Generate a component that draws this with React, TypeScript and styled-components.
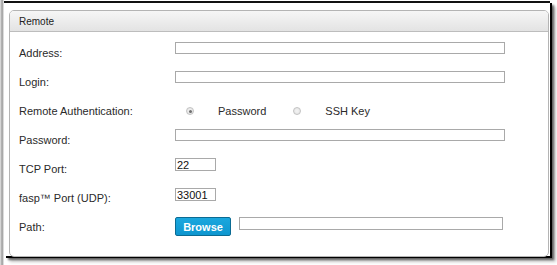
import React from "react";
import styled, { createGlobalStyle } from "styled-components";

const GlobalStyle = createGlobalStyle`
  html, body {
    margin: 0;
    padding: 0;
    background: #fff;
  }
  body {
    font-family: "Liberation Sans", Arial, sans-serif;
    color: #222;
  }
`;

const Frame = styled.div`
  width: 557px;
  height: 265px;
  box-sizing: border-box;
  padding: 1px 0 0 4px;
  background: linear-gradient(
    to right,
    #e4e4e4 0,
    #c8c8c8 1px,
    #9a9a9a 2px,
    #b8b8b8 3px,
    #fff 4px
  );
`;

const Window = styled.div`
  width: 546px;
  height: 255px;
  box-sizing: border-box;
  border-top: 2px solid #111;
  background: #fff;
  padding: 7px 0 0 5px;
  box-shadow: 2px 2px 0 #000, 4px 4px 2px rgba(0, 0, 0, 0.55),
    6px 6px 3px rgba(0, 0, 0, 0.2);
`;

const Panel = styled.section`
  width: 540px;
  height: 247px;
  box-sizing: border-box;
  border: 1px solid #b4b4b4;
  border-radius: 5px;
  overflow: hidden;
`;

const PanelHeader = styled.header`
  height: 21px;
  box-sizing: border-box;
  padding-left: 9px;
  display: flex;
  align-items: center;
  font-size: 10px;
  color: #222;
  background: linear-gradient(to bottom, #f6f6f6, #e3e3e3);
  border-bottom: 1px solid #bdbdbd;
`;

const Form = styled.div`
  display: grid;
  grid-template-columns: 156px 1fr;
  grid-auto-rows: 29px;
  padding: 6px 0 0 9px;
`;

const Label = styled.div`
  font-size: 11px;
  line-height: 14px;
  padding-top: 8px;
  color: #2a2a2a;
`;

const Field = styled.div<{ $top?: number }>`
  display: flex;
  align-items: flex-start;
  gap: 8px;
  padding-top: ${(p) => p.$top ?? 4}px;
`;

const TextInput = styled.input<{ $w: number; $h?: number }>`
  width: ${(p) => p.$w}px;
  height: ${(p) => p.$h ?? 12}px;
  box-sizing: border-box;
  border: 1px solid #a9a9a9;
  padding: 0 1px;
  margin: 0;
  font-family: "Liberation Sans", Arial, sans-serif;
  font-size: 11px;
  line-height: 10px;
  color: #111;
  background: #fff;
  outline: none;
`;

const RadioGroup = styled.div`
  display: flex;
  align-items: center;
  height: 14px;
  margin-top: 8px;
  padding-left: 11px;
  font-size: 11px;
  color: #2a2a2a;
`;

const RadioOption = styled.label`
  display: flex;
  align-items: center;
  gap: 24px;
  margin-right: 27px;
`;

const RadioDot = styled.span<{ $checked?: boolean }>`
  width: 8px;
  height: 8px;
  box-sizing: border-box;
  border-radius: 50%;
  border: 1px solid #c2c2c2;
  background: radial-gradient(circle, #f4f4f4 0, #e2e2e2 100%);
  display: flex;
  align-items: center;
  justify-content: center;
  &::after {
    content: "";
    width: 3px;
    height: 3px;
    border-radius: 50%;
    background: ${(p) => (p.$checked ? "#707070" : "transparent")};
  }
`;

const BrowseButton = styled.button`
  width: 56px;
  height: 19px;
  box-sizing: border-box;
  margin: 0;
  padding: 0;
  border: 1px solid #0b6b93;
  border-radius: 2px;
  background: linear-gradient(to bottom, #1aa7de, #0e96cf);
  color: #fff;
  font-family: "Liberation Sans", Arial, sans-serif;
  font-size: 11px;
  font-weight: bold;
  cursor: pointer;
`;

export default function App() {
  return (
    <>
      <GlobalStyle />
      <Frame>
        <Window>
          <Panel>
            <PanelHeader>Remote</PanelHeader>
            <Form>
              <Label>Address:</Label>
              <Field>
                <TextInput $w={330} />
              </Field>

              <Label>Login:</Label>
              <Field>
                <TextInput $w={330} />
              </Field>

              <Label>Remote Authentication:</Label>
              <RadioGroup>
                <RadioOption>
                  <RadioDot $checked />
                  Password
                </RadioOption>
                <RadioOption>
                  <RadioDot />
                  SSH Key
                </RadioOption>
              </RadioGroup>

              <Label>Password:</Label>
              <Field>
                <TextInput $w={330} type="text" />
              </Field>

              <Label>TCP Port:</Label>
              <Field>
                <TextInput $w={41} $h={13} defaultValue="22" />
              </Field>

              <Label>fasp™ Port (UDP):</Label>
              <Field $top={5}>
                <TextInput $w={41} $h={13} defaultValue="33001" />
              </Field>

              <Label>Path:</Label>
              <Field $top={5}>
                <BrowseButton>Browse</BrowseButton>
                <TextInput $w={264} $h={13} />
              </Field>
            </Form>
          </Panel>
        </Window>
      </Frame>
    </>
  );
}
